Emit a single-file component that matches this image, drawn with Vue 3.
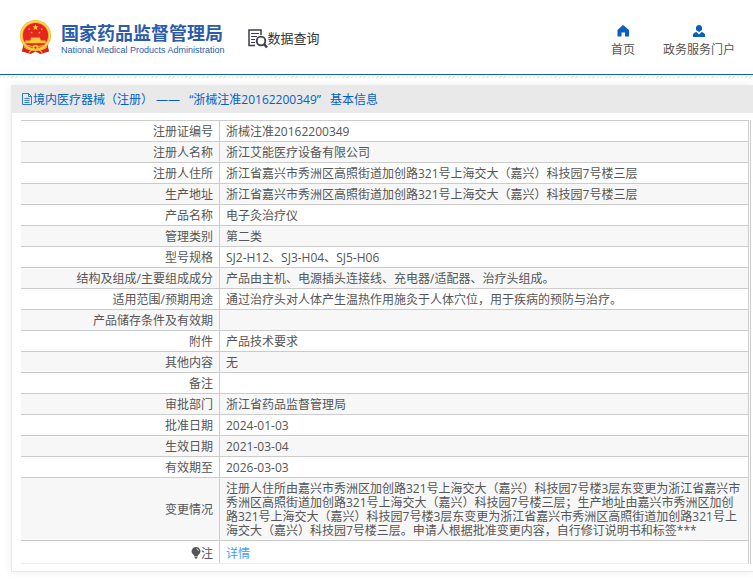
<template>
  <div class="page">
    <header class="header">
      <a class="logo" href="#">
        <svg class="emblem" viewBox="0 0 34 36" aria-hidden="true">
          <path d="M5 24 L3 33 L12 35.500 L17 33 L22 35.500 L31 33 L29 24 Z" fill="#d91f1c" />
          <circle cx="17" cy="16.5" r="16" fill="#f2b632" />
          <circle cx="17" cy="16.5" r="14.6" fill="none" stroke="#ffd95c" stroke-width="1.2" />
          <circle cx="17" cy="16.5" r="13" fill="#e6251f" />
          <path d="M17 5 l.8 2 2.200.1 -1.700 1.400 .6 2.200 -1.900-1.300 -1.900 1.300 .6-2.200 -1.700-1.400 2.200-.1z" fill="#ffc83d" />
          <circle cx="10.500" cy="10" r=".9" fill="#f7a63a" />
          <circle cx="23.500" cy="10" r=".9" fill="#f7a63a" />
          <circle cx="13" cy="13.500" r=".9" fill="#f7a63a" />
          <circle cx="21" cy="13.500" r=".9" fill="#f7a63a" />
          <path d="M12.500 18.500 h9 l1 3 h5 v3 H6.500 v-3 h5z" fill="#ffc83d" />
          <path d="M8 26.500 q9 3 18 0" fill="none" stroke="#f2b632" stroke-width="1.2" />
          <circle cx="17" cy="29" r="3" fill="#ffc83d" />
          <circle cx="17" cy="29" r="1.2" fill="#d91f1c" />
          <path d="M5 28 q5 5 9 2 M29 28 q-5 5 -9 2 M10 34 l4-3 M24 34 l-4-3" fill="none" stroke="#f7b93a" stroke-width="1.200" />
        </svg>
        <span class="logo-text">
          <strong>国家药品监督管理局</strong>
          <small>National Medical Products Administration</small>
        </span>
      </a>
      <a class="query" href="#">
        <svg width="20" height="20" viewBox="0 0 20 20" fill="none" stroke="#3d3d4a" aria-hidden="true">
          <path d="M7 16.5 H1 V1 H13 V6" stroke-width="1.5" />
          <path d="M3 4.5 h8 M3 7.5 h6 M3 10.5 h4 M3 13.5 h4" stroke-width="1.2" />
          <circle cx="13" cy="12" r="4.3" stroke-width="1.8" />
          <path d="M16 15 l3 3.5" stroke-width="2.5" />
        </svg>
        <span>数据查询</span>
      </a>
      <nav class="nav">
        <a href="#">
          <svg width="12" height="12" viewBox="0 0 12 12" fill="#0560c2" aria-hidden="true">
            <path d="M6 0 L12 5 V11.5 H8 V7.5 H4.500 V11.5 H0.500 V5 Z" />
          </svg>
          <span>首页</span>
        </a>
        <a href="#">
          <svg width="12" height="12" viewBox="0 0 12 12" fill="#0560c2" aria-hidden="true">
            <path d="M6 0 a3.200 3.200 0 0 1 1.500 6 L6 7 L4.500 6 A3.200 3.200 0 0 1 6 0z" />
            <path d="M0 12 V10 Q0 8 3.500 7 L6 9.500 L8.500 7 Q12 8 12 10 V12z" />
          </svg>
          <span>政务服务门户</span>
        </a>
      </nav>
    </header>
    <div class="hatch"></div>

    <main class="card">
      <h1 class="title">
        <span class="category">
          <svg width="10" height="12" viewBox="0 0 10 12" fill="none" stroke="#0560c2" aria-hidden="true">
            <path d="M.5 .5 H6.500 L9.500 3.500 V11.500 H.5z M6.500 .5 V3.500 H9.500 M2.500 5.500 h5 M2.500 7.500 h5 M2.500 9.500 h5" stroke-width=".8" />
          </svg>
          境内医疗器械（注册） ——
        </span>
        <span>“浙械注准20162200349”</span>
        <span>基本信息</span>
      </h1>
      <div class="table-container">
        <table>
          <tbody>
            <tr v-for="row in rows" :key="row.label">
              <th scope="row">{{ row.label }}</th>
              <td>{{ row.value }}</td>
            </tr>
            <tr class="note">
              <th scope="row">
                <svg width="10" height="12" viewBox="0 0 10 12" fill="#555" aria-hidden="true">
                  <path d="M5 0 a4.200 4.200 0 0 1 2.500 7.700 L6.500 9.500 h-3 L2.500 7.700 A4.200 4.200 0 0 1 5 0z M3.500 10 h3 l-.5 1.500 h-2z" />
                  <path d="M5.500 1.800 q1.700.3 2 2" fill="none" stroke="#fff" stroke-width=".8" />
                </svg>注
              </th>
              <td><a href="#">详情</a></td>
            </tr>
          </tbody>
        </table>
      </div>
    </main>
  </div>
</template>

<script setup>
const rows = [
  { label: '注册证编号', value: '浙械注准20162200349' },
  { label: '注册人名称', value: '浙江艾能医疗设备有限公司' },
  { label: '注册人住所', value: '浙江省嘉兴市秀洲区高照街道加创路321号上海交大（嘉兴）科技园7号楼三层' },
  { label: '生产地址', value: '浙江省嘉兴市秀洲区高照街道加创路321号上海交大（嘉兴）科技园7号楼三层' },
  { label: '产品名称', value: '电子灸治疗仪' },
  { label: '管理类别', value: '第二类' },
  { label: '型号规格', value: 'SJ2-H12、SJ3-H04、SJ5-H06' },
  { label: '结构及组成/主要组成成分', value: '产品由主机、电源插头连接线、充电器/适配器、治疗头组成。' },
  { label: '适用范围/预期用途', value: '通过治疗头对人体产生温热作用施灸于人体穴位，用于疾病的预防与治疗。' },
  { label: '产品储存条件及有效期', value: '' },
  { label: '附件', value: '产品技术要求' },
  { label: '其他内容', value: '无' },
  { label: '备注', value: '' },
  { label: '审批部门', value: '浙江省药品监督管理局' },
  { label: '批准日期', value: '2024-01-03' },
  { label: '生效日期', value: '2021-03-04' },
  { label: '有效期至', value: '2026-03-03' },
  {
    label: '变更情况',
    value: `注册人住所由嘉兴市秀洲区加创路321号上海交大（嘉兴）科技园7号楼3层东变更为浙江省嘉兴市
秀洲区高照街道加创路321号上海交大（嘉兴）科技园7号楼三层；生产地址由嘉兴市秀洲区加创
路321号上海交大（嘉兴）科技园7号楼3层东变更为浙江省嘉兴市秀洲区高照街道加创路321号上
海交大（嘉兴）科技园7号楼三层。申请人根据批准变更内容，自行修订说明书和标签***`,
  },
];
</script>

<style>
body {
  margin: 0;
  background: #fff;
}
</style>

<style scoped>
.page {
  overflow: hidden;
  padding-bottom: 10px;
  font-family: "Open Sans", "Noto Sans CJK SC", sans-serif;
  font-size: 12px;
  color: #555;
}

a {
  color: inherit;
  text-decoration: none;
}

.header {
  display: flex;
  align-items: center;
  height: 74px;
  padding: 0 18px 0 19px;
  border-bottom: 1px solid #0560c2;
}

.logo {
  display: flex;
  align-items: center;
  gap: 9px;
  color: #2b5cab;
}

.emblem {
  width: 33px;
  height: 36px;
}

.logo-text {
  display: flex;
  flex-direction: column;
  padding-top: 4px;
}

.logo-text strong {
  font-size: 18px;
  line-height: 22px;
}

.logo-text small {
  font-family: "Liberation Sans", Arial, sans-serif;
  font-size: 9px;
  line-height: 12px;
  white-space: nowrap;
}

.query {
  display: flex;
  align-items: center;
  margin-left: 23px;
  padding-top: 2px;
  font-size: 13px;
  line-height: 16px;
  color: #333;
}

.query svg {
  margin-top: 2px;
}

.nav {
  display: flex;
  gap: 28px;
  margin-left: auto;
  padding-top: 10px;
}

.nav a {
  display: flex;
  flex-direction: column;
  align-items: center;
  gap: 4px;
  line-height: 18px;
}

.hatch {
  height: 2px;
  margin-top: 1px;
  background: repeating-linear-gradient(135deg, #e4e4e4 0 1px, #fff 1px 3px);
}

.card {
  margin: 7px 0 0 11px;
  border: 1px solid #e8e8ee;
  border-width: 0 0 1px 1px;
  box-shadow: 0 0 8px rgba(0, 0, 0, 0.08);
}

.title {
  display: flex;
  align-items: center;
  gap: 9px;
  height: 27px;
  margin: 0;
  padding: 0 10px;
  border-bottom: 1px solid #e8eaf2;
  background: #e9e9e9;
  font-size: 12px;
  font-weight: normal;
  white-space: nowrap;
  color: #0560c2;
}

.category {
  display: flex;
  align-items: center;
  gap: 1px;
}

.table-container {
  margin: 7px 2px 7px 9px;
  padding-right: 1px;
  border-right: 1px solid #ccc;
}

table {
  width: 100%;
  border-collapse: collapse;
  border-top: 1px solid #ccc;
}

th, td {
  height: 14px;
  padding: 4px 6px 2px;
  border: 1px solid #ccc;
  font-weight: normal;
  line-height: 14px;
  text-align: left;
  white-space: pre-line;
}

th {
  width: 186px;
  border-left: none;
  text-align: right;
}

tr:nth-child(even) {
  background: #f7f7f7;
}

.note th, .note td {
  height: 15px;
  padding-top: 5px;
  border-bottom-color: #eee;
}

.note a {
  color: #409eff;
}

.note svg {
  vertical-align: -1px;
}
</style>
